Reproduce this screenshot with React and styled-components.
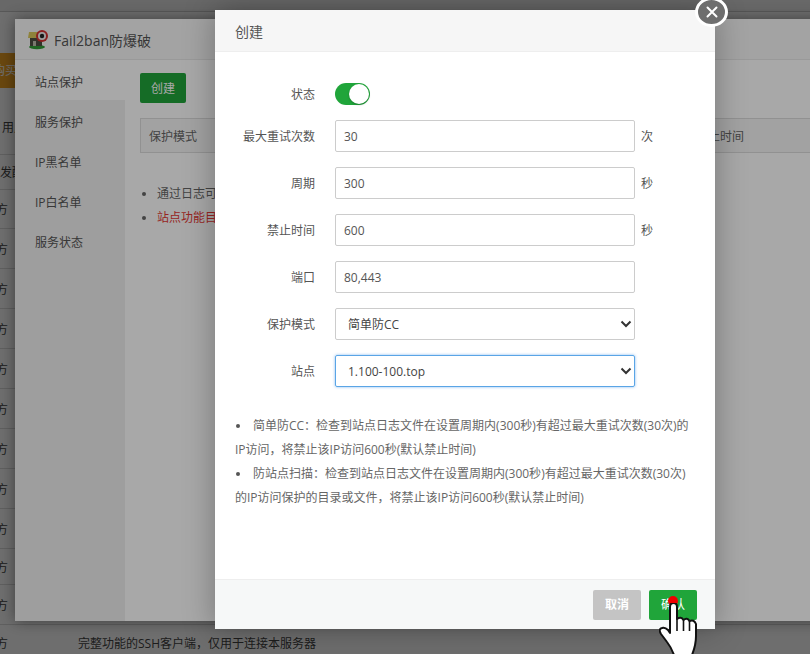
import React from 'react';
import styled, { createGlobalStyle } from 'styled-components';

const FONT = '"Open Sans", "Noto Sans CJK SC", sans-serif';

const GlobalStyle = createGlobalStyle`
  html, body {
    margin: 0;
    padding: 0;
    background: #fff;
    font-family: ${FONT};
  }
  * { box-sizing: border-box; }
`;

const Screen = styled.div`
  position: relative;
  width: 810px;
  height: 654px;
  overflow: hidden;
  background: #fff;
  font-size: 12px;
  color: #666;
`;

const Overlay = styled.div`
  position: absolute;
  inset: 0;
  background: rgba(0, 0, 0, 0.34);
`;

/* page behind everything */
const PageTop = styled.div`
  height: 12px;
  background: #f0f0f0;
  border-bottom: 1px solid #ccc;
`;

const BuyButton = styled.div`
  margin-top: 41px;
  margin-bottom: 12px;
  width: 60px;
  height: 35px;
  background: #f5a623;
  color: #fff;
  line-height: 35px;
  text-indent: -7px;
  overflow: hidden;
  white-space: nowrap;
`;

const PageRow = styled.div`
  display: flex;
  align-items: center;
  height: ${p => p.$h}px;
  border-bottom: 1px solid #ddd;
  color: #444;
  white-space: nowrap;
`;

const RowHead = styled.span`
  width: 78px;
  flex-shrink: 0;
  text-indent: ${p => p.$indent ?? -4}px;
`;

/* Fail2ban window */
const PluginWindow = styled.div`
  position: absolute;
  left: 15px;
  top: 19px;
  width: 900px;
  height: 602px;
  background: #fff;
  box-shadow: 0 0 14px rgba(0, 0, 0, 0.45);
`;

const WindowTitle = styled.div`
  display: flex;
  align-items: center;
  gap: 5px;
  height: 41px;
  padding: 1px 0 0 12px;
  background: #f8f8f8;
  border-bottom: 1px solid #e8e8e8;
  font-size: 14px;
  color: #555;
`;

const WindowBody = styled.div`
  display: flex;
  height: 561px;
`;

const SideMenu = styled.div`
  width: 110px;
  background: #f0f0f0;
`;

const SideItem = styled.div`
  height: 40px;
  line-height: 45px;
  padding-left: 20px;
  color: #555;
  background: ${p => (p.$active ? '#fff' : 'transparent')};
`;

const WindowMain = styled.div`
  flex: 1;
  padding: 13px 15px;
`;

const CreateButton = styled.div`
  width: 46px;
  height: 30px;
  line-height: 31px;
  text-align: center;
  background: #20a53a;
  border-radius: 2px;
  color: #fff;
`;

const TableHead = styled.div`
  display: flex;
  justify-content: space-between;
  align-items: center;
  height: 35px;
  margin-top: 15px;
  padding: 1px 155px 0 8px;
  background: #f6f6f6;
  border: 1px solid #ddd;
`;

const BackNotes = styled.ul`
  margin: 29px 0 0;
  padding: 0 0 0 17px;
  line-height: 24px;
  color: #666;
`;

const BackNote = styled.li`
  color: ${p => (p.$red ? '#e53935' : 'inherit')};
  &::marker { color: #666; }
`;

/* create dialog */
const Dialog = styled.div`
  position: absolute;
  left: 215px;
  top: 10px;
  display: flex;
  flex-direction: column;
  width: 500px;
  height: 619px;
  background: #fff;
  box-shadow: 0 0 30px rgba(0, 0, 0, 0.3);
`;

const DialogHeader = styled.div`
  height: 42px;
  line-height: 44px;
  padding-left: 20px;
  background: #f6f6f6;
  border-bottom: 1px solid #eee;
  font-size: 14px;
  color: #555;
`;

const DialogBody = styled.div`
  flex: 1;
  padding: 26px 20px 0;
`;

const FormRow = styled.div`
  display: flex;
  align-items: center;
  height: 32px;
  margin-bottom: ${p => p.$gap ?? 15}px;
  color: #555;
`;

const FormLabel = styled.label`
  width: 80px;
  margin-right: 20px;
  text-align: right;
`;

const TextInput = styled.input`
  width: 300px;
  height: 32px;
  padding: 0 8px;
  border: 1px solid #ccc;
  border-radius: 2px;
  outline: none;
  font: 12px ${FONT};
  color: #555;
`;

const Unit = styled.span`
  margin-left: 6px;
  color: #555;
`;

const SelectWrap = styled.div`
  position: relative;
  width: 300px;
  height: 32px;
  border-radius: 2px;
  box-shadow: ${p => (p.$focus ? '0 0 3px rgba(50, 140, 230, 0.6)' : 'none')};
`;

const Select = styled.select`
  appearance: none;
  width: 100%;
  height: 100%;
  padding-left: 12px;
  background: #fff;
  border: 1px solid ${p => (p.$focus ? '#5aa5e6' : '#ccc')};
  border-radius: 2px;
  outline: none;
  font: 12px ${FONT};
  color: #444;
`;

const Chevron = styled.svg`
  position: absolute;
  right: 3px;
  top: 11px;
  width: 12px;
  height: 10px;
  pointer-events: none;
`;

const Toggle = styled.div`
  position: relative;
  width: 35px;
  height: 22px;
  border-radius: 11px;
  background: #20a53a;
  &::after {
    content: '';
    position: absolute;
    right: 1px;
    top: 1px;
    width: 20px;
    height: 20px;
    border-radius: 50%;
    background: #fff;
    box-shadow: 0 1px 2px rgba(0, 0, 0, 0.25);
  }
`;

const Notes = styled.ul`
  margin: 27px 0 0;
  padding: 0;
  list-style: none;
  line-height: 24px;
  color: #666;
`;

const Note = styled.li`
  &::before {
    content: '';
    display: inline-block;
    width: 4px;
    height: 4px;
    margin: 0 13px 2px 1px;
    border-radius: 50%;
    background: #555;
  }
`;

const DialogFooter = styled.div`
  display: flex;
  justify-content: flex-end;
  align-items: center;
  gap: 8px;
  height: 50px;
  padding-right: 18px;
  background: #f6f8f8;
  border-top: 1px solid #eee;
`;

const FooterButton = styled.div`
  width: 48px;
  height: 30px;
  line-height: 30px;
  text-align: center;
  border-radius: 2px;
  color: #fff;
  background: ${p => (p.$primary ? '#20a53a' : '#c4c4c4')};
  font-weight: ${p => (p.$primary ? 400 : 700)};
`;

const CloseButton = styled.div`
  position: absolute;
  left: 695px;
  top: -3px;
  display: flex;
  align-items: center;
  justify-content: center;
  width: 33px;
  height: 30px;
  border: 3px solid #fff;
  border-radius: 50%;
  background: #6e6e6e;
`;

const ClickDot = styled.div`
  position: absolute;
  left: 668px;
  top: 596px;
  width: 10px;
  height: 10px;
  border-radius: 50%;
  background: #f00000;
`;

const HandCursor = styled.svg`
  position: absolute;
  left: 659px;
  top: 603px;
  width: 39px;
  height: 51px;
`;

// full-width punctuation, written as escapes so it stays full-width
const COLON = '\uFF1A';
const COMMA = '\uFF0C';

const pageRows = [
  { h: 55, head: '用户', indent: 2 },
  { h: 35, head: '发酷', indent: 0 },
  { h: 39 }, { h: 40 }, { h: 40 }, { h: 40 }, { h: 40 }, { h: 40 },
  { h: 40 }, { h: 40 }, { h: 40 }, { h: 36 }, { h: 40 },
  { h: 37, text: `完整功能的SSH客户端${COMMA}仅用于连接本服务器` },
];

const menu = ['站点保护', '服务保护', 'IP黑名单', 'IP白名单', '服务状态'];

const notes = [
  `简单防CC${COLON}检查到站点日志文件在设置周期内(300秒)有超过最大重试次数(30次)的IP访问${COMMA}将禁止该IP访问600秒(默认禁止时间)`,
  `防站点扫描${COLON}检查到站点日志文件在设置周期内(300秒)有超过最大重试次数(30次)的IP访问保护的目录或文件${COMMA}将禁止该IP访问600秒(默认禁止时间)`,
];

const LogoIcon = () => (
  <svg width="22" height="21" viewBox="0 0 22 21">
    <ellipse cx="10" cy="18" rx="8" ry="2.2" fill="#2f9a35" />
    <rect x="3" y="9" width="12" height="8" fill="#4c4c40" />
    <rect x="6" y="12" width="3" height="5" fill="#b8b8a8" />
    <path d="M1 9 L2 3 H13 L14 9 Z" fill="#d8c65a" />
    <circle cx="15" cy="7" r="6" fill="#d32f2f" />
    <circle cx="15" cy="7" r="4" fill="#eee" />
    <circle cx="15" cy="7" r="2.2" fill="#222" />
  </svg>
);

const ChevronIcon = () => (
  <Chevron viewBox="0 0 12 10">
    <path d="M1.5 2.5 L6 7 L10.5 2.5" fill="none" stroke="#333" strokeWidth="2" />
  </Chevron>
);

const App = () => (
  <Screen>
    <GlobalStyle />
    <PageTop />
    <BuyButton>购买</BuyButton>
    {pageRows.map((row, i) => (
      <PageRow key={i} $h={row.h}>
        <RowHead $indent={row.indent}>{row.head || '方'}</RowHead>
        {row.text}
      </PageRow>
    ))}
    <Overlay />

    <PluginWindow>
      <WindowTitle>
        <LogoIcon />
        Fail2ban防爆破
      </WindowTitle>
      <WindowBody>
        <SideMenu>
          {menu.map((m, i) => (
            <SideItem key={m} $active={i === 0}>{m}</SideItem>
          ))}
        </SideMenu>
        <WindowMain>
          <CreateButton>创建</CreateButton>
          <TableHead>
            <span>保护模式</span>
            <span>禁止时间</span>
          </TableHead>
          <BackNotes>
            <BackNote>通过日志可分析</BackNote>
            <BackNote $red>站点功能目前</BackNote>
          </BackNotes>
        </WindowMain>
      </WindowBody>
    </PluginWindow>
    <Overlay />

    <Dialog>
      <DialogHeader>创建</DialogHeader>
      <DialogBody>
        <FormRow $gap={10}>
          <FormLabel>状态</FormLabel>
          <Toggle />
        </FormRow>
        <FormRow>
          <FormLabel>最大重试次数</FormLabel>
          <TextInput defaultValue="30" readOnly />
          <Unit>次</Unit>
        </FormRow>
        <FormRow>
          <FormLabel>周期</FormLabel>
          <TextInput defaultValue="300" readOnly />
          <Unit>秒</Unit>
        </FormRow>
        <FormRow>
          <FormLabel>禁止时间</FormLabel>
          <TextInput defaultValue="600" readOnly />
          <Unit>秒</Unit>
        </FormRow>
        <FormRow>
          <FormLabel>端口</FormLabel>
          <TextInput defaultValue="80,443" readOnly />
        </FormRow>
        <FormRow>
          <FormLabel>保护模式</FormLabel>
          <SelectWrap>
            <Select defaultValue="cc">
              <option value="cc">简单防CC</option>
            </Select>
            <ChevronIcon />
          </SelectWrap>
        </FormRow>
        <FormRow $gap={0}>
          <FormLabel>站点</FormLabel>
          <SelectWrap $focus>
            <Select $focus defaultValue="site">
              <option value="site">1.100-100.top</option>
            </Select>
            <ChevronIcon />
          </SelectWrap>
        </FormRow>
        <Notes>
          {notes.map(n => (
            <Note key={n}>{n}</Note>
          ))}
        </Notes>
      </DialogBody>
      <DialogFooter>
        <FooterButton>取消</FooterButton>
        <FooterButton $primary>确认</FooterButton>
      </DialogFooter>
    </Dialog>

    <CloseButton>
      <svg width="14" height="14" viewBox="0 0 14 14">
        <path d="M2.5 2.5 L11.5 11.5 M11.5 2.5 L2.5 11.5" stroke="#fff" strokeWidth="2" strokeLinecap="round" />
      </svg>
    </CloseButton>

    <ClickDot />
    <HandCursor viewBox="0 0 39 51">
      <path
        d="M11 4 Q11 0 14.5 0 Q18 0 18 4 V16 Q22 13 24.5 17 Q28 14 30.5 18 Q35 16 37 21 V33 Q37 42 33 52 H15 Q12 44 8 39 L2 31 Q-1 26 3 25 Q6 24 9 27 L11 30 Z"
        fill="#fff"
        stroke="#111"
        strokeWidth="2"
        strokeLinejoin="round"
      />
      <path d="M18 16 V28 M24.5 17 V28 M30.5 18 V28" fill="none" stroke="#111" strokeWidth="1.6" />
    </HandCursor>
  </Screen>
);

export default App;
